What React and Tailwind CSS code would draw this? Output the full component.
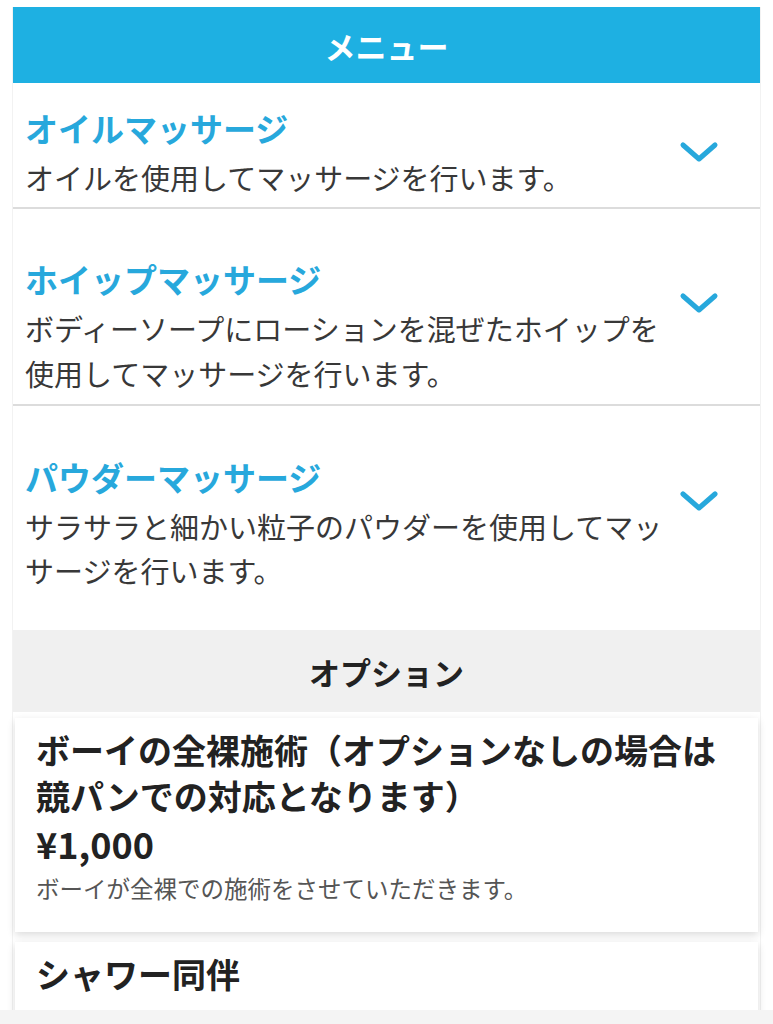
import React from 'react';

const menus = [
  {
    title: 'オイルマッサージ',
    desc: 'オイルを使用してマッサージを行います。',
    pad: 'pt-[22px] pb-[7px]',
    lead: 'leading-[45px]',
  },
  {
    title: 'ホイップマッサージ',
    desc: 'ボディーソープにローションを混ぜたホイップを使用してマッサージを行います。',
    pad: 'pt-[47px] pb-[8px]',
    lead: 'leading-[45px]',
  },
  {
    title: 'パウダーマッサージ',
    desc: 'サラサラと細かい粒子のパウダーを使用してマッサージを行います。',
    pad: 'pt-[48px] pb-[38px]',
    lead: 'leading-[44px]',
  },
];

const options = [
  {
    title: 'ボーイの全裸施術（オプションなしの場合は競パンでの対応となります）',
    price: '¥1,000',
    desc: 'ボーイが全裸での施術をさせていただきます。',
  },
  {
    title: 'シャワー同伴',
    price: '¥1,000',
    desc: 'ボーイと一緒にシャワーを浴びていただけます。',
  },
];

const Chevron = () => (
  <svg width="40" height="24" viewBox="0 0 40 24" className="shrink-0 mt-[35px] ml-[2px]">
    <polyline
      points="4,5 20,19 36,5"
      fill="none"
      stroke="#27a8dc"
      strokeWidth="5"
      strokeLinecap="round"
      strokeLinejoin="round"
    />
  </svg>
);

export default function App() {
  return (
    <div
      className="relative h-[1024px] overflow-hidden bg-white"
      style={{ fontFamily: '"Noto Sans CJK JP", "Noto Sans", sans-serif' }}
    >
      <div className="mx-[12px] mt-[7px] border-x border-[#f2f2f2]">
        {/* Header */}
        <div className="h-[76px] bg-[#1eb0e2] flex items-center justify-center">
          <h2 className="text-[31px] font-bold text-white leading-none">メニュー</h2>
        </div>

        {/* Menu items */}
        {menus.map((m, i) => (
          <div key={m.title}>
            <div className={`flex items-start pl-[12px] ${m.pad}`}>
              <div className="w-[652px]">
                <h3 className="text-[33px] font-bold text-[#27a8dc] leading-[46px]">{m.title}</h3>
                <p className={`mt-[4px] text-[29px] text-[#383838] ${m.lead}`}>{m.desc}</p>
              </div>
              <Chevron />
            </div>
            {i < menus.length - 1 && <div className="h-[2px] bg-[#dcdcdc]" />}
          </div>
        ))}

        {/* Options header */}
        <div className="h-[82px] bg-[#f0f0f0] flex items-center justify-center">
          <h2 className="text-[31px] font-bold text-[#222] leading-none">オプション</h2>
        </div>

        {/* Option cards */}
        <div className="pt-[6px] px-[2px] flex flex-col gap-[10px]">
          {options.map((o) => (
            <div
              key={o.title}
              className="bg-white pl-[21px] pr-[36px] pt-[9px] pb-[28px] shadow-[0_3px_8px_rgba(0,0,0,0.14)]"
            >
              <h3 className="text-[34px] font-bold text-[#222] leading-[46px]">{o.title}</h3>
              <div className="mt-[3px] text-[36px] font-bold text-[#222] leading-[42px]">{o.price}</div>
              <p className="mt-[8px] text-[23.5px] text-[#555] leading-[32px]">{o.desc}</p>
            </div>
          ))}
        </div>
      </div>

      {/* bottom toolbar strip */}
      <div className="absolute left-0 right-0 bottom-0 h-[14px] bg-[#f4f4f4]" />
    </div>
  );
}
